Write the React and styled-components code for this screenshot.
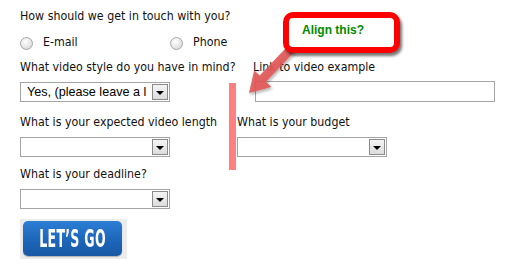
import styled, { createGlobalStyle } from 'styled-components'

const GlobalStyle = createGlobalStyle`
  html, body {
    margin: 0;
    padding: 0;
    background: #fff;
  }
  body {
    font-family: "DejaVu Sans Condensed", "DejaVu Sans", Tahoma, sans-serif;
    font-size: 12.3px;
    color: #111;
  }
`;

const Page = styled.div`
  position: relative;
  width: 507px;
  height: 268px;
  padding: 8px 0 0 20px;
  box-sizing: border-box;
  overflow: hidden;
`;

const Label = styled.div`
  line-height: 16px;
  height: 16px;
  white-space: nowrap;
`;

const RadioRow = styled.div`
  display: flex;
  margin-top: 10px;
  height: 16px;
`;

const RadioOption = styled.label`
  display: flex;
  align-items: center;
  gap: 10px;
  width: ${p => p.$width || 'auto'};
  line-height: 16px;
`;

const RadioDot = styled.span`
  width: 11px;
  height: 11px;
  border-radius: 50%;
  border: 1px solid #a8a8a8;
  background: radial-gradient(circle at 40% 35%, #ffffff 0%, #e6e6e6 55%, #cfcfcf 100%);
  box-sizing: content-box;
  margin-top: 2px;
`;

const Row = styled.div`
  display: flex;
  margin-top: ${p => p.$top}px;
`;

const Field = styled.div`
  display: flex;
  flex-direction: column;
  width: ${p => (p.$width ? `${p.$width}px` : 'auto')};
  flex-shrink: 0;
`;

const SelectBox = styled.div`
  display: flex;
  width: 150px;
  height: 20px;
  margin-top: 7px;
  border: 1px solid #a5a5a5;
  box-sizing: border-box;
  background: #fff;
`;

const SelectValue = styled.span`
  flex: 1;
  overflow: hidden;
  white-space: nowrap;
  font-family: "Liberation Sans", Arial, sans-serif;
  font-size: 12.6px;
  line-height: 18px;
  padding-left: 6px;
  color: #000;
`;

const DropButton = styled.span`
  width: 16px;
  height: 16px;
  margin: 1px;
  border: 1px solid #8a8a8a;
  box-sizing: border-box;
  background: linear-gradient(#f4f4f4, #dcdcdc);
  display: flex;
  align-items: center;
  justify-content: center;

  &::after {
    content: '';
    border-left: 4px solid transparent;
    border-right: 4px solid transparent;
    border-top: 4px solid #000;
    margin-top: 1px;
  }
`;

const TextInput = styled.div`
  width: 240px;
  height: 21px;
  margin-top: 6px;
  margin-left: 2px;
  border: 1px solid #a5a5a5;
  box-sizing: border-box;
  background: #fff;
`;

const ButtonFrame = styled.div`
  width: 107px;
  height: 40px;
  margin-top: 10px;
  background: #ececec;
  padding: 2px 5px 0 3px;
  box-sizing: border-box;
`;

const GoButton = styled.button`
  width: 99px;
  height: 35px;
  border: none;
  border-radius: 5px;
  background: linear-gradient(#2b7ed4, #1c64b7 60%, #1a58a3);
  box-shadow: 0 1px 1px rgba(0, 0, 0, 0.25);
  color: #fff;
  padding: 0;
  display: flex;
  align-items: center;
  justify-content: center;
  cursor: pointer;
`;

const GoText = styled.span`
  display: inline-block;
  font-family: "DejaVu Sans Condensed", "DejaVu Sans", sans-serif;
  font-weight: bold;
  font-size: 25px;
  letter-spacing: 0.5px;
  transform: scaleX(0.56);
  line-height: 25px;
  white-space: nowrap;
`;

const Marker = styled.div`
  position: absolute;
  left: 229px;
  top: 83px;
  width: 7px;
  height: 87px;
  background: #ff8080;
`;

const Callout = styled.div`
  position: absolute;
  left: 283px;
  top: 12px;
  width: 117px;
  height: 41px;
  box-sizing: border-box;
  border: 6px solid #ff0000;
  border-radius: 10px;
  background: #fff;
  box-shadow: 2px 3px 3px rgba(0, 0, 0, 0.55);
  z-index: 2;
  padding: 5px 0 0 13px;
  font-family: "Liberation Sans", Arial, sans-serif;
  font-weight: bold;
  font-size: 12px;
  color: #008a00;
`;

const ArrowSvg = styled.svg`
  position: absolute;
  left: 240px;
  top: 40px;
  z-index: 1;
  overflow: visible;
`;

function Select({ value }) {
  return (
    <SelectBox>
      <SelectValue>{value}</SelectValue>
      <DropButton />
    </SelectBox>
  )
}

export default function App() {
  return (
    <>
      <GlobalStyle />
      <Page>
        <Label>How should we get in touch with you?</Label>
        <RadioRow>
          <RadioOption $width="150px"><RadioDot />E-mail</RadioOption>
          <RadioOption><RadioDot />Phone</RadioOption>
        </RadioRow>

        <Row $top={9}>
          <Field $width={233}>
            <Label>What video style do you have in mind?</Label>
            <Select value="Yes, (please leave a l" />
          </Field>
          <Field>
            <Label>Link to video example</Label>
            <TextInput />
          </Field>
        </Row>

        <Row $top={12}>
          <Field $width={217}>
            <Label>What is your expected video length</Label>
            <Select />
          </Field>
          <Field>
            <Label>What is your budget</Label>
            <Select />
          </Field>
        </Row>

        <Row $top={9}>
          <Field>
            <Label>What is your deadline?</Label>
            <Select />
          </Field>
        </Row>

        <ButtonFrame>
          <GoButton><GoText>LET’S GO</GoText></GoButton>
        </ButtonFrame>

        <Marker />
        <ArrowSvg width="60" height="60" viewBox="0 0 60 60">
          <defs>
            <filter id="arrowShadow" x="-30%" y="-30%" width="160%" height="160%">
              <feDropShadow dx="1" dy="2" stdDeviation="1.5" floodColor="#000" floodOpacity="0.35" />
            </filter>
          </defs>
          <polygon
            points="9,53 31.4,46.9 26,41.7 55.2,11.1 48.8,4.9 19.6,35.5 14.2,30.3"
            fill="#e25757"
            fillOpacity="0.9"
            filter="url(#arrowShadow)"
          />
        </ArrowSvg>
        <Callout>Align this?</Callout>
      </Page>
    </>
  )
}
